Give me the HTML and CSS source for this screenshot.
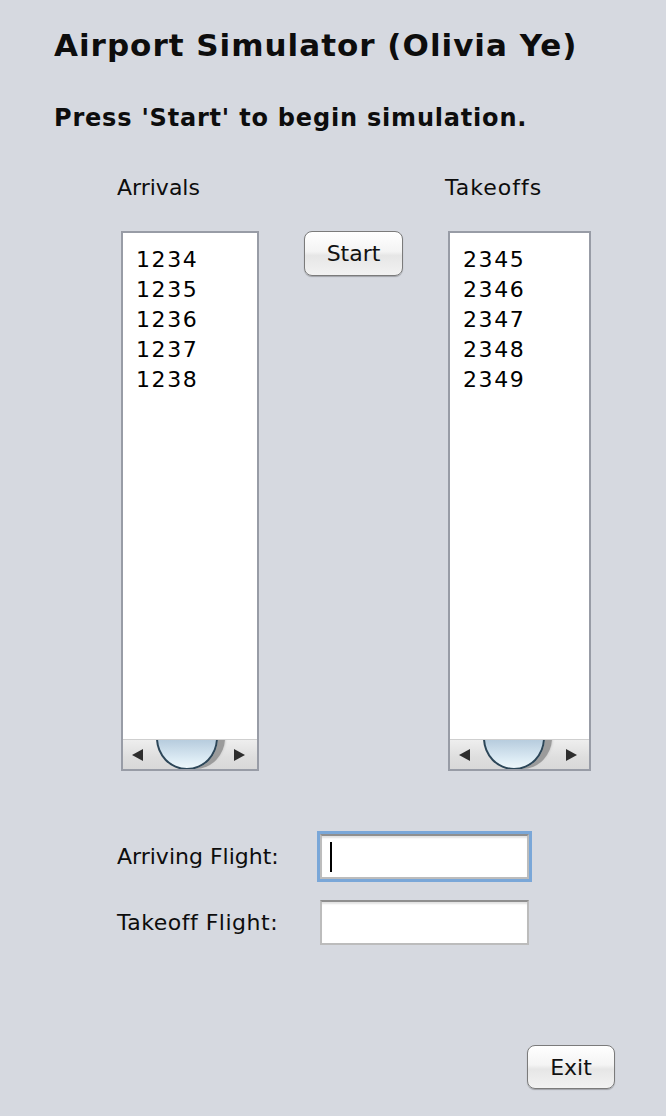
FILE: index.html
```html
<!DOCTYPE html>
<html>
<head>
<meta charset="utf-8">
<title>Airport Simulator</title>
<link rel="stylesheet" href="styles.css">
</head>
<body>
<div class="app">
  <h1 class="title">Airport Simulator (Olivia Ye)</h1>
  <p class="prompt">Press 'Start' to begin simulation.</p>

  <div class="lists">
    <div class="col-label">Arrivals</div>
    <div></div>
    <div class="col-label col-label-wide">Takeoffs</div>

    <div class="listbox listbox-arr">
      <ul class="items">
        <li>1234</li><li>1235</li><li>1236</li><li>1237</li><li>1238</li>
      </ul>
      <div class="hscroll">
        <span class="arrow arrow-left"></span>
        <span class="knob"></span>
        <span class="arrow arrow-right"></span>
      </div>
    </div>
    <div class="mid"><button class="btn btn-start">Start</button></div>
    <div class="listbox listbox-take">
      <ul class="items">
        <li>2345</li><li>2346</li><li>2347</li><li>2348</li><li>2349</li>
      </ul>
      <div class="hscroll">
        <span class="arrow arrow-left"></span>
        <span class="knob"></span>
        <span class="arrow arrow-right"></span>
      </div>
    </div>
  </div>

  <div class="form">
    <label class="form-label">Arriving Flight:</label>
    <div class="field field-focus"><span class="caret"></span></div>
    <label class="form-label form-label-wide">Takeoff Flight:</label>
    <div class="field"></div>
  </div>

  <div class="footer">
    <button class="btn btn-exit">Exit</button>
  </div>
</div>
</body>
</html>
```

FILE: styles.css
```css
html, body {
  margin: 0;
  padding: 0;
  background: #d6d9e0;
}
body {
  font-family: "DejaVu Sans", "Liberation Sans", sans-serif;
  color: #0d0d0d;
}
.app {
  width: 666px;
  height: 1116px;
  box-sizing: border-box;
  padding: 25px 0 0 54px;
  display: flex;
  flex-direction: column;
}
.title {
  margin: 0;
  font-size: 31px;
  line-height: 40px;
  font-weight: bold;
  letter-spacing: 1px;
}
.prompt {
  margin: 38px 0 0 0;
  font-size: 24px;
  line-height: 30px;
  font-weight: bold;
  letter-spacing: 0.8px;
}
.lists {
  margin: 43px 0 0 63px;
  display: grid;
  grid-template-columns: 187px 141px 146px;
  grid-template-rows: 24px 540px;
  row-gap: 31px;
}
.col-label {
  font-size: 22px;
  line-height: 24px;
}
.col-label-wide { letter-spacing: 1px; }
.listbox {
  background: #fff;
  border: 2px solid #989ca6;
  display: flex;
  flex-direction: column;
  justify-content: space-between;
  overflow: hidden;
}
.listbox-arr { margin-left: 4px; width: 134px; }
.listbox-take { margin-left: 3px; width: 139px; }
.items {
  list-style: none;
  margin: 0;
  padding: 12px 0 0 13px;
  font-size: 22px;
  line-height: 30px;
  letter-spacing: 1.6px;
  color: #000;
}
.hscroll {
  position: relative;
  height: 29px;
  background: linear-gradient(#eeeeee, #dedede 60%, #d8d8d8);
  border-top: 1px solid #cfcfcf;
  display: flex;
  align-items: center;
  justify-content: space-between;
  padding: 0 12px 0 9px;
  overflow: hidden;
}
.arrow {
  width: 0;
  height: 0;
  border-top: 6px solid transparent;
  border-bottom: 6px solid transparent;
}
.arrow-left { border-right: 11px solid #2d2d2d; }
.arrow-right { border-left: 11px solid #2d2d2d; }
.knob {
  position: absolute;
  left: 33px;
  top: -34px;
  width: 58px;
  height: 60px;
  border-radius: 50%;
  border: 2px solid #2c4658;
  background: linear-gradient(#9fb8cc, #b9cedf 55%, #dcebf4 85%, #eef7fb);
  box-shadow: 8px 0 0 -1px #9b9b9b, 10px 0 2px -2px #d0d0d0;
}
.mid { display: flex; align-items: flex-start; }
.btn {
  font-family: "DejaVu Sans", "Liberation Sans", sans-serif;
  font-size: 22px;
  color: #111;
  border: 1.5px solid #7b7b7b;
  border-radius: 8px;
  background: linear-gradient(#ffffff, #f4f4f4 45%, #e6e6e6 55%, #f2f2f2);
  box-shadow: 0 1px 1px rgba(0,0,0,0.25);
  padding: 0;
}
.btn-start { width: 99px; height: 45px; }
.form {
  margin: 63px 0 0 63px;
  display: grid;
  grid-template-columns: 203px 209px;
  grid-template-rows: 45px 45px;
  row-gap: 21px;
  align-items: center;
}
.form-label {
  font-size: 22px;
  line-height: 26px;
}
.form-label-wide { letter-spacing: 0.5px; }
.field {
  height: 45px;
  box-sizing: border-box;
  background: #fff;
  border: 2px solid #bcbcbc;
  border-top-color: #8f8f8f;
  box-shadow: inset 0 3px 2px -1px #e2e2e2;
  display: flex;
  align-items: center;
  padding-left: 8px;
}
.field-focus {
  outline: 3px solid #7aa7d8;
  outline-offset: 0;
}
.caret {
  display: block;
  width: 2px;
  height: 30px;
  background: #000;
}
.footer {
  margin-top: auto;
  margin-bottom: 27px;
  padding-right: 51px;
  display: flex;
  justify-content: flex-end;
}
.btn-exit { width: 88px; height: 44px; }
```
